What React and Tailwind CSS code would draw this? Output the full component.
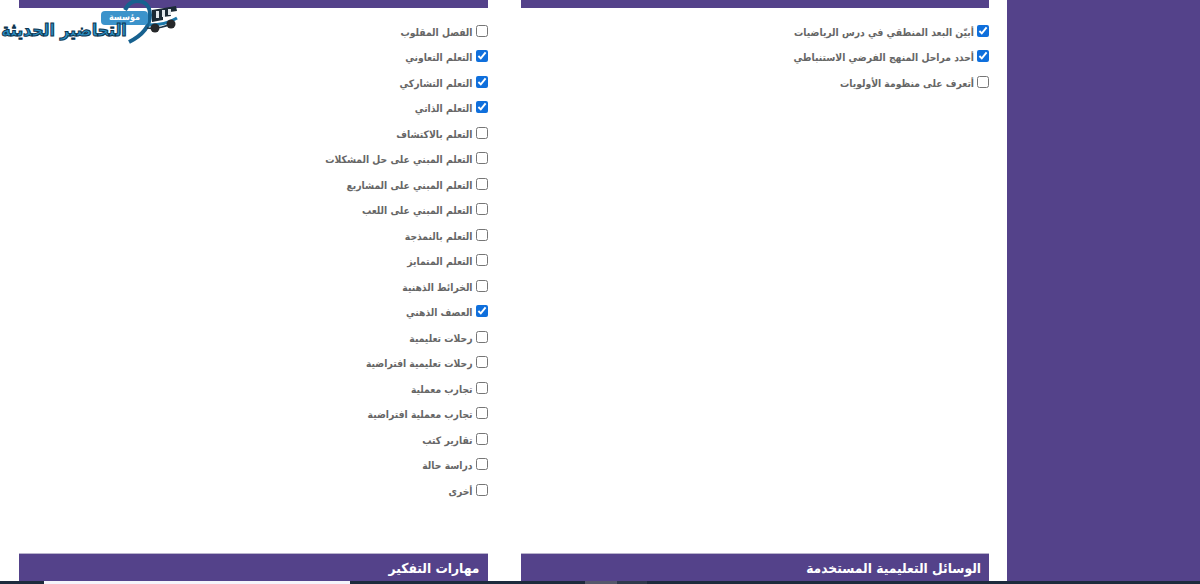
const leftItems = [
  ["الفصل المقلوب", false],
  ["التعلم التعاوني", true],
  ["التعلم التشاركي", true],
  ["التعلم الذاتي", true],
  ["التعلم بالاكتشاف", false],
  ["التعلم المبني على حل المشكلات", false],
  ["التعلم المبني على المشاريع", false],
  ["التعلم المبني على اللعب", false],
  ["التعلم بالنمذجة", false],
  ["التعلم المتمايز", false],
  ["الخرائط الذهنية", false],
  ["العصف الذهني", true],
  ["رحلات تعليمية", false],
  ["رحلات تعليمية افتراضية", false],
  ["تجارب معملية", false],
  ["تجارب معملية افتراضية", false],
  ["تقارير كتب", false],
  ["دراسة حالة", false],
  ["أخرى", false],
];

const rightItems = [
  ["أبيّن البعد المنطقي في درس الرياضيات", true],
  ["أحدد مراحل المنهج الفرضي الاستنباطي", true],
  ["أتعرف على منظومة الأولويات", false],
];

function CheckRow({ label, checked }) {
  return (
    <label className="flex h-[25.5px] items-center gap-[3px] text-[10.25px] font-bold text-[#666666]">
      <input type="checkbox" defaultChecked={checked} className="m-0 h-[12px] w-[12px] accent-[#0f6fdc]" />
      <span className="pt-[3px]">{label}</span>
    </label>
  );
}

function Column({ items, title }) {
  return (
    <div className="flex h-full flex-col">
      <div className="h-2 bg-[#54428a]" />
      <div className="flex flex-1 flex-col pt-[10px]">
        {items.map(([label, checked]) => (
          <CheckRow key={label} label={label} checked={checked} />
        ))}
      </div>
      <div className="flex h-[28px] items-start border-t border-[#b9b3cc] bg-[#54428a] px-2 pt-[4px]">
        <h3 className="text-[13.7px] leading-5 font-bold text-white">{title}</h3>
      </div>
    </div>
  );
}

function Logo() {
  return (
    <div className="absolute top-0 left-0 h-[44px] w-[182px]">
      <svg width="182" height="44" viewBox="0 0 182 44" className="absolute top-0 left-0">
        {/* truck body */}
        <path d="M152 10l24-4 1 5-7 1 1 4-8 1 0 3-11 2z" fill="#1b2a35" />
        <path d="M156 11h3v7h-3zM162 10h3v7h-3zM168 9h3v6h-3z" fill="#dfe6ea" />
        {/* swoosh */}
        <path d="M129 42C143 35 150 25 150 15 150 6 145 1 137 1 132 1 128 4 125 10" fill="none" stroke="#17618f" strokeWidth="4" />
        <path d="M149 25c10 0 20-2 28-7" fill="none" stroke="#1c78aa" strokeWidth="3" />
        <path d="M147 28c9 1 17-1 24-4" fill="none" stroke="#1d3445" strokeWidth="1.5" />
        <circle cx="155" cy="28" r="4.5" fill="#26282a" />
        <circle cx="171" cy="24" r="4.5" fill="#26282a" />
      </svg>
      <span className="absolute top-[11px] left-[101px] flex h-[14px] w-[47px] items-center justify-center rounded-[4px] bg-[#3b93cb] pb-[1px] text-[9px] font-bold text-white">
        مؤسسة
      </span>
      <span
        dir="rtl"
        className="absolute top-[20px] left-0 w-[128px] text-center text-[17.5px] leading-5 font-bold whitespace-nowrap text-[#2a8fc4] [-webkit-text-stroke:1px_#0d3550]"
      >
        التحاضير الحديثة
      </span>
    </div>
  );
}

export default function App() {
  return (
    <div
      className="relative flex h-[584px] w-[1200px] overflow-hidden bg-[#54428a]"
      style={{ fontFamily: '"DejaVu Sans Condensed", "DejaVu Sans", sans-serif' }}
    >
      <main dir="rtl" className="grid h-full w-[1007px] grid-cols-2 gap-[33px] bg-white pr-[18px] pb-[3px] pl-[19px]">
        <Column items={rightItems} title="الوسائل التعليمية المستخدمة" />
        <Column items={leftItems} title="مهارات التفكير" />
      </main>
      <Logo />
      {/* browser strip along the bottom edge */}
      <div className="absolute right-0 bottom-0 left-0 flex h-[3px] bg-[#1d2b3d]">
        <div className="ml-[44px] w-[306px] bg-[#f4f4fb]" />
        <div className="ml-[235px] w-[32px] bg-[#55586c]" />
        <div className="w-[30px] bg-[#2f3a4c]" />
      </div>
    </div>
  );
}
